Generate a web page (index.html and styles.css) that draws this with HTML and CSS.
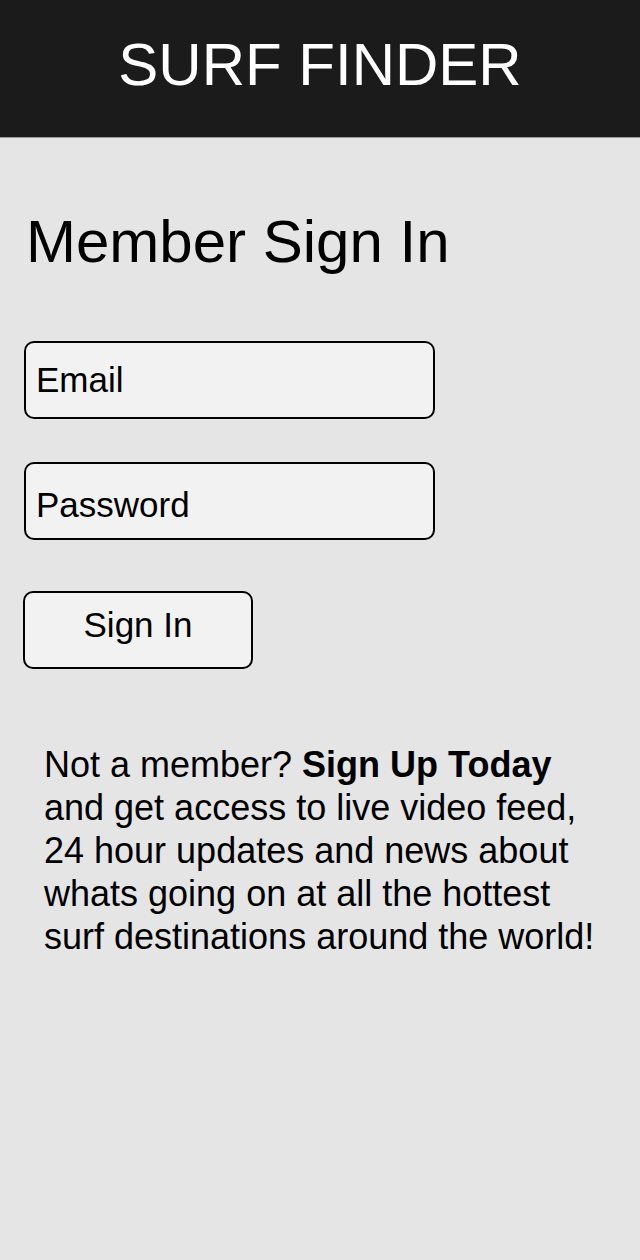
FILE: index.html
```html
<!DOCTYPE html>
<html lang="en">
<head>
<meta charset="utf-8">
<title>Surf Finder</title>
<link rel="stylesheet" href="styles.css">
</head>
<body>
<header class="topbar">
  <div class="brand">SURF FINDER</div>
</header>
<main class="content">
  <h1 class="title">Member Sign In</h1>
  <form class="signin">
    <input class="field" type="email" placeholder="Email">
    <input class="field field-pass" type="password" placeholder="Password">
    <button class="btn" type="button">Sign In</button>
  </form>
  <p class="promo">Not a member? <strong>Sign Up Today</strong> and get access to live video feed, 24 hour updates and news about whats going on at all the hottest surf destinations around the world!</p>
</main>
</body>
</html>
```

FILE: styles.css
```css
* { box-sizing: border-box; }

html, body {
  margin: 0;
  padding: 0;
}

body {
  background: #e5e5e5;
  font-family: "Liberation Sans", Arial, Helvetica, sans-serif;
  color: #000;
  min-height: 1260px;
}

.topbar {
  height: 138px;
  background: #1b1b1b;
  border-bottom: 1px solid #9a9a9a;
  padding-top: 35px;
  text-align: center;
}

.brand {
  color: #fff;
  font-size: 60px;
  line-height: 1;
}

.content {
  padding: 0 24px;
}

.title {
  margin: 74px 0 0 2px;
  font-size: 60px;
  font-weight: normal;
  line-height: 1;
}

.signin {
  display: flex;
  flex-direction: column;
  align-items: flex-start;
  margin-top: 69px;
}

.field {
  width: 411px;
  height: 78px;
  border: 2px solid #000;
  border-radius: 10px;
  background: #f2f2f2;
  padding: 0 10px;
  font-family: inherit;
  font-size: 35px;
  color: #000;
  outline: none;
}

.field::placeholder {
  color: #000;
  opacity: 1;
}

.field-pass {
  margin-top: 43px;
  padding-top: 8px;
}

.btn {
  margin: 51px 0 0 -1px;
  width: 230px;
  height: 78px;
  border: 2px solid #000;
  border-radius: 10px;
  background: #f2f2f2;
  padding: 0 0 10px 0;
  font-family: inherit;
  font-size: 35px;
  color: #000;
}

.promo {
  margin: 74px 0 0 20px;
  width: 560px;
  font-size: 36px;
  line-height: 43px;
}

.promo strong {
  font-weight: bold;
}
```
